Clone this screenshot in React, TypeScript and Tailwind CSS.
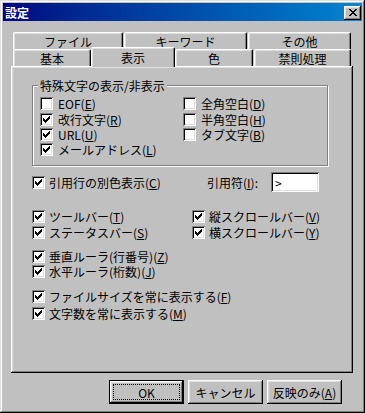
import React from "react";

const FONT = { fontFamily: '"Noto Sans CJK JP", "MS UI Gothic", sans-serif' };

const raised =
  "shadow-[inset_-1px_-1px_#000,inset_1px_1px_#fff,inset_-2px_-2px_#808080,inset_2px_2px_#dfdfdf]";
const sunken =
  "shadow-[inset_1px_1px_#808080,inset_-1px_-1px_#fff,inset_2px_2px_#000,inset_-2px_-2px_#dfdfdf]";

function CheckMark() {
  return (
    <svg width="7" height="7" viewBox="0 0 7 7" shapeRendering="crispEdges">
      <path
        fill="#000"
        d="M6 0h1v1h-1z M5 1h2v1h-2z M0 2h1v1h-1z M4 2h3v1h-3z M0 3h2v1h-2z M3 3h3v1h-3z M0 4h5v1h-5z M1 5h3v1h-3z M2 6h1v1h-1z"
      />
    </svg>
  );
}

function Box({ checked }: { checked?: boolean }) {
  return (
    <span
      className={`w-[13px] h-[13px] bg-white ${sunken} flex items-center justify-center shrink-0`}
    >
      {checked && <CheckMark />}
    </span>
  );
}

function Label({ text, k }: { text: string; k?: string }) {
  return (
    <span className="text-[12px] leading-[13px] whitespace-nowrap text-black">
      {text}
      {k && (
        <>
          (<u>{k}</u>)
        </>
      )}
    </span>
  );
}

function CB({
  checked,
  text,
  k,
  className = "",
  gap = "gap-[5px]",
}: {
  checked?: boolean;
  text: string;
  k?: string;
  className?: string;
  gap?: string;
}) {
  return (
    <div className={`flex items-center h-[13px] ${gap} ${className}`}>
      <Box checked={checked} />
      <Label text={text} k={k} />
    </div>
  );
}

function Tab({
  label,
  className = "",
}: {
  label: string;
  className?: string;
}) {
  return (
    <div
      className={`h-[17px] flex items-center justify-center text-[12px] leading-[13px] rounded-t-[2px] bg-[#c0c0c0] border-t border-l border-t-white border-l-white border-r border-r-black shadow-[inset_-1px_0_#808080,inset_1px_1px_#dfdfdf] ${className}`}
    >
      {label}
    </div>
  );
}

function Btn({
  children,
  def,
}: {
  children: React.ReactNode;
  def?: boolean;
}) {
  if (def) {
    return (
      <div className="w-[75px] h-[24px] border border-black bg-[#c0c0c0] flex">
        <div
          className={`flex-1 ${raised} p-[3px] flex`}
        >
          <div className="flex-1 border border-dotted border-black flex items-center justify-center text-[12px] leading-[13px]">
            {children}
          </div>
        </div>
      </div>
    );
  }
  return (
    <div
      className={`w-[75px] h-[24px] bg-[#c0c0c0] ${raised} flex items-center justify-center text-[12px] leading-[13px]`}
    >
      {children}
    </div>
  );
}

export default function App() {
  return (
    <div
      style={FONT}
      className="w-[365px] h-[413px] bg-[#c0c0c0] p-[3px] flex flex-col shadow-[inset_-1px_-1px_#000,inset_1px_1px_#dfdfdf,inset_-2px_-2px_#808080,inset_2px_2px_#fff] text-black"
    >
      {/* Title bar */}
      <div className="h-[18px] bg-gradient-to-r from-[#000080] to-[#1084d0] flex items-center justify-between pl-[2px] pr-[1px]">
        <span className="text-white font-bold text-[12px] leading-[13px]">設定</span>
        <div
          className={`w-[17px] h-[14px] bg-[#c0c0c0] ${raised} flex items-center justify-center mt-[1px]`}
        >
          <svg width="8" height="7" viewBox="0 0 8 7" shapeRendering="crispEdges">
            <path
              fill="#000"
              d="M0 0h2v1h-2z M6 0h2v1h-2z M1 1h2v1h-2z M5 1h2v1h-2z M2 2h4v1h-4z M3 3h2v1h-2z M2 4h4v1h-4z M1 5h2v1h-2z M5 5h2v1h-2z M0 6h2v1h-2z M6 6h2v1h-2z"
            />
          </svg>
        </div>
      </div>

      {/* Tabs + panel */}
      <div className="pl-[8px] pt-[11px] flex flex-col">
        <div className="flex h-[17px] ml-[2px]">
          <Tab label="ファイル" className="w-[110px]" />
          <Tab label="キーワード" className="w-[123px] ml-[1px]" />
          <Tab label="その他" className="w-[103px] ml-[1px]" />
        </div>
        <div className="flex h-[17px] ml-[2px] items-end">
          <Tab label="基本" className="w-[78px]" />
          <div className="w-[84px] h-[20px] -mb-[1px] relative z-10 flex items-start justify-center pt-[3px] text-[12px] leading-[13px] rounded-t-[2px] bg-[#c0c0c0] border-t border-l border-t-white border-l-white border-r border-r-black shadow-[inset_-1px_0_#808080,inset_1px_1px_#dfdfdf]">
            表示
          </div>
          <Tab label="色" className="w-[78px]" />
          <Tab label="禁則処理" className="w-[97px] ml-[1px]" />
        </div>

        {/* Panel */}
        <div
          className={`w-[342px] h-[307px] ${raised} flex flex-col pl-[21px]`}
        >
          {/* Group box */}
          <div className="mt-[19px] w-[296px] h-[81px] border border-[#808080] shadow-[inset_1px_1px_#fff,1px_1px_#fff] relative flex pl-[7px] pt-[11px]">
            <span className="absolute -top-[7px] left-[5px] bg-[#c0c0c0] px-[2px] text-[12px] leading-[13px] whitespace-nowrap">
              特殊文字の表示/非表示
            </span>
            <div className="w-[143px] flex flex-col">
              <CB text="EOF" k="E" />
              <CB checked text="改行文字" k="R" className="mt-[3px]" />
              <CB checked text="URL" k="U" className="mt-[2px]" />
              <CB checked text="メールアドレス" k="L" className="mt-[2px]" />
            </div>
            <div className="flex flex-col">
              <CB text="全角空白" k="D" />
              <CB text="半角空白" k="H" className="mt-[3px]" />
              <CB text="タブ文字" k="B" className="mt-[2px]" />
            </div>
          </div>

          {/* Quote row */}
          <div className="mt-[6px] h-[20px] flex items-center">
            <div className="w-[175px]">
              <CB checked text="引用行の別色表示" k="C" gap="gap-[4px]" />
            </div>
            <div className="w-[64px] text-[12px] leading-[13px] whitespace-nowrap">
              引用符(<u>I</u>):
            </div>
            <div
              className={`w-[48px] h-[20px] bg-white ${sunken} flex items-center pl-[4px] text-[12px] leading-[13px]`}
            >
              &gt;
            </div>
          </div>

          {/* Toolbars */}
          <div className="mt-[18px] flex">
            <div className="w-[160px] flex flex-col">
              <CB checked text="ツールバー" k="T" gap="gap-[4px]" />
              <CB checked text="ステータスバー" k="S" gap="gap-[4px]" className="mt-[3px]" />
            </div>
            <div className="flex flex-col">
              <CB checked text="縦スクロールバー" k="V" gap="gap-[4px]" />
              <CB checked text="横スクロールバー" k="Y" gap="gap-[4px]" className="mt-[3px]" />
            </div>
          </div>

          <CB checked text="垂直ルーラ(行番号)" k="Z" gap="gap-[4px]" className="mt-[11px]" />
          <CB checked text="水平ルーラ(桁数)" k="J" gap="gap-[4px]" className="mt-[2px]" />

          <CB checked text="ファイルサイズを常に表示する" k="F" gap="gap-[4px]" className="mt-[12px]" />
          <CB checked text="文字数を常に表示する" k="M" gap="gap-[4px]" className="mt-[4px]" />
        </div>
      </div>

      {/* Buttons */}
      <div className="mt-[7px] flex justify-end gap-[4px] pr-[20px]">
        <Btn def>OK</Btn>
        <Btn>キャンセル</Btn>
        <Btn>
          反映のみ(<u>A</u>)
        </Btn>
      </div>
    </div>
  );
}
